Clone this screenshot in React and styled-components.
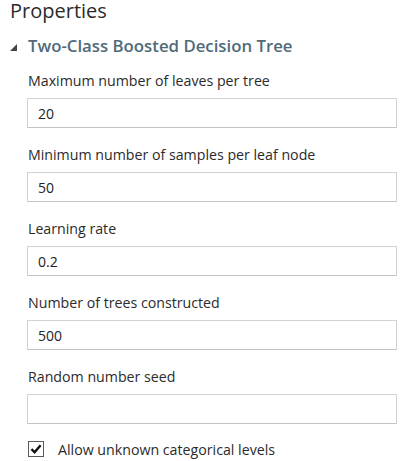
import React from 'react';
import styled, { createGlobalStyle } from 'styled-components';

const GlobalStyle = createGlobalStyle`
  html, body {
    margin: 0;
    padding: 0;
    background: #ffffff;
  }
  body {
    font-family: "Open Sans", "Noto Sans", sans-serif;
    color: #2b2b2b;
  }
`;

const Panel = styled.div`
  width: 400px;
  height: 461px;
  background: #ffffff;
`;

const Title = styled.h1`
  margin: 0;
  padding-left: 10px;
  font-size: 20px;
  font-weight: 400;
  line-height: 22px;
  color: #2b2b2b;
`;

const SectionHeader = styled.div`
  display: flex;
  align-items: center;
  margin-top: 14px;
  padding-left: 10px;
  height: 20px;
`;

const Caret = styled.svg`
  width: 7px;
  height: 7px;
  margin-right: 11px;
  margin-top: 2px;
  flex-shrink: 0;
`;

const SectionTitle = styled.span`
  font-size: 16.8px;
  font-weight: 600;
  line-height: 20px;
  color: #4f6b7a;
`;

const Fields = styled.div`
  display: flex;
  flex-direction: column;
  gap: 17px;
  margin-top: 15px;
  padding: 0 3px 0 27px;
`;

const Field = styled.div`
  display: flex;
  flex-direction: column;
  gap: 7px;
`;

const Label = styled.label`
  padding-left: 1px;
  font-size: 14.2px;
  line-height: 20px;
  color: #2b2b2b;
`;

const TextBox = styled.div`
  box-sizing: border-box;
  height: 30px;
  padding-left: 10px;
  display: flex;
  align-items: center;
  border: 1px solid #d2d2d2;
  border-bottom-color: #c4c4c4;
  font-size: 14px;
  color: #222222;
`;

const CheckRow = styled.label`
  display: flex;
  align-items: center;
  gap: 14px;
  height: 16px;
  padding-left: 1px;
  font-size: 14.2px;
  color: #2b2b2b;
`;

const Box = styled.span`
  box-sizing: border-box;
  width: 16px;
  height: 16px;
  border: 1px solid #5a5a5a;
  display: flex;
  align-items: center;
  justify-content: center;
  background: #ffffff;
`;

const fields = [
  { label: 'Maximum number of leaves per tree', value: '20' },
  { label: 'Minimum number of samples per leaf node', value: '50' },
  { label: 'Learning rate', value: '0.2' },
  { label: 'Number of trees constructed', value: '500' },
  { label: 'Random number seed', value: '' },
];

export default function App() {
  return (
    <Panel>
      <GlobalStyle />
      <Title>Properties</Title>
      <SectionHeader>
        <Caret viewBox="0 0 7 7">
          <polygon points="7,0 7,7 0,7" fill="#444" />
        </Caret>
        <SectionTitle>Two-Class Boosted Decision Tree</SectionTitle>
      </SectionHeader>
      <Fields>
        {fields.map((f) => (
          <Field key={f.label}>
            <Label>{f.label}</Label>
            <TextBox>{f.value}</TextBox>
          </Field>
        ))}
        <CheckRow>
          <Box>
            <svg width="12" height="12" viewBox="0 0 12 12">
              <path d="M1.5 6.2 L4.6 9.3 L10.6 2.2" fill="none" stroke="#111" strokeWidth="2.4" />
            </svg>
          </Box>
          Allow unknown categorical levels
        </CheckRow>
      </Fields>
    </Panel>
  );
}
